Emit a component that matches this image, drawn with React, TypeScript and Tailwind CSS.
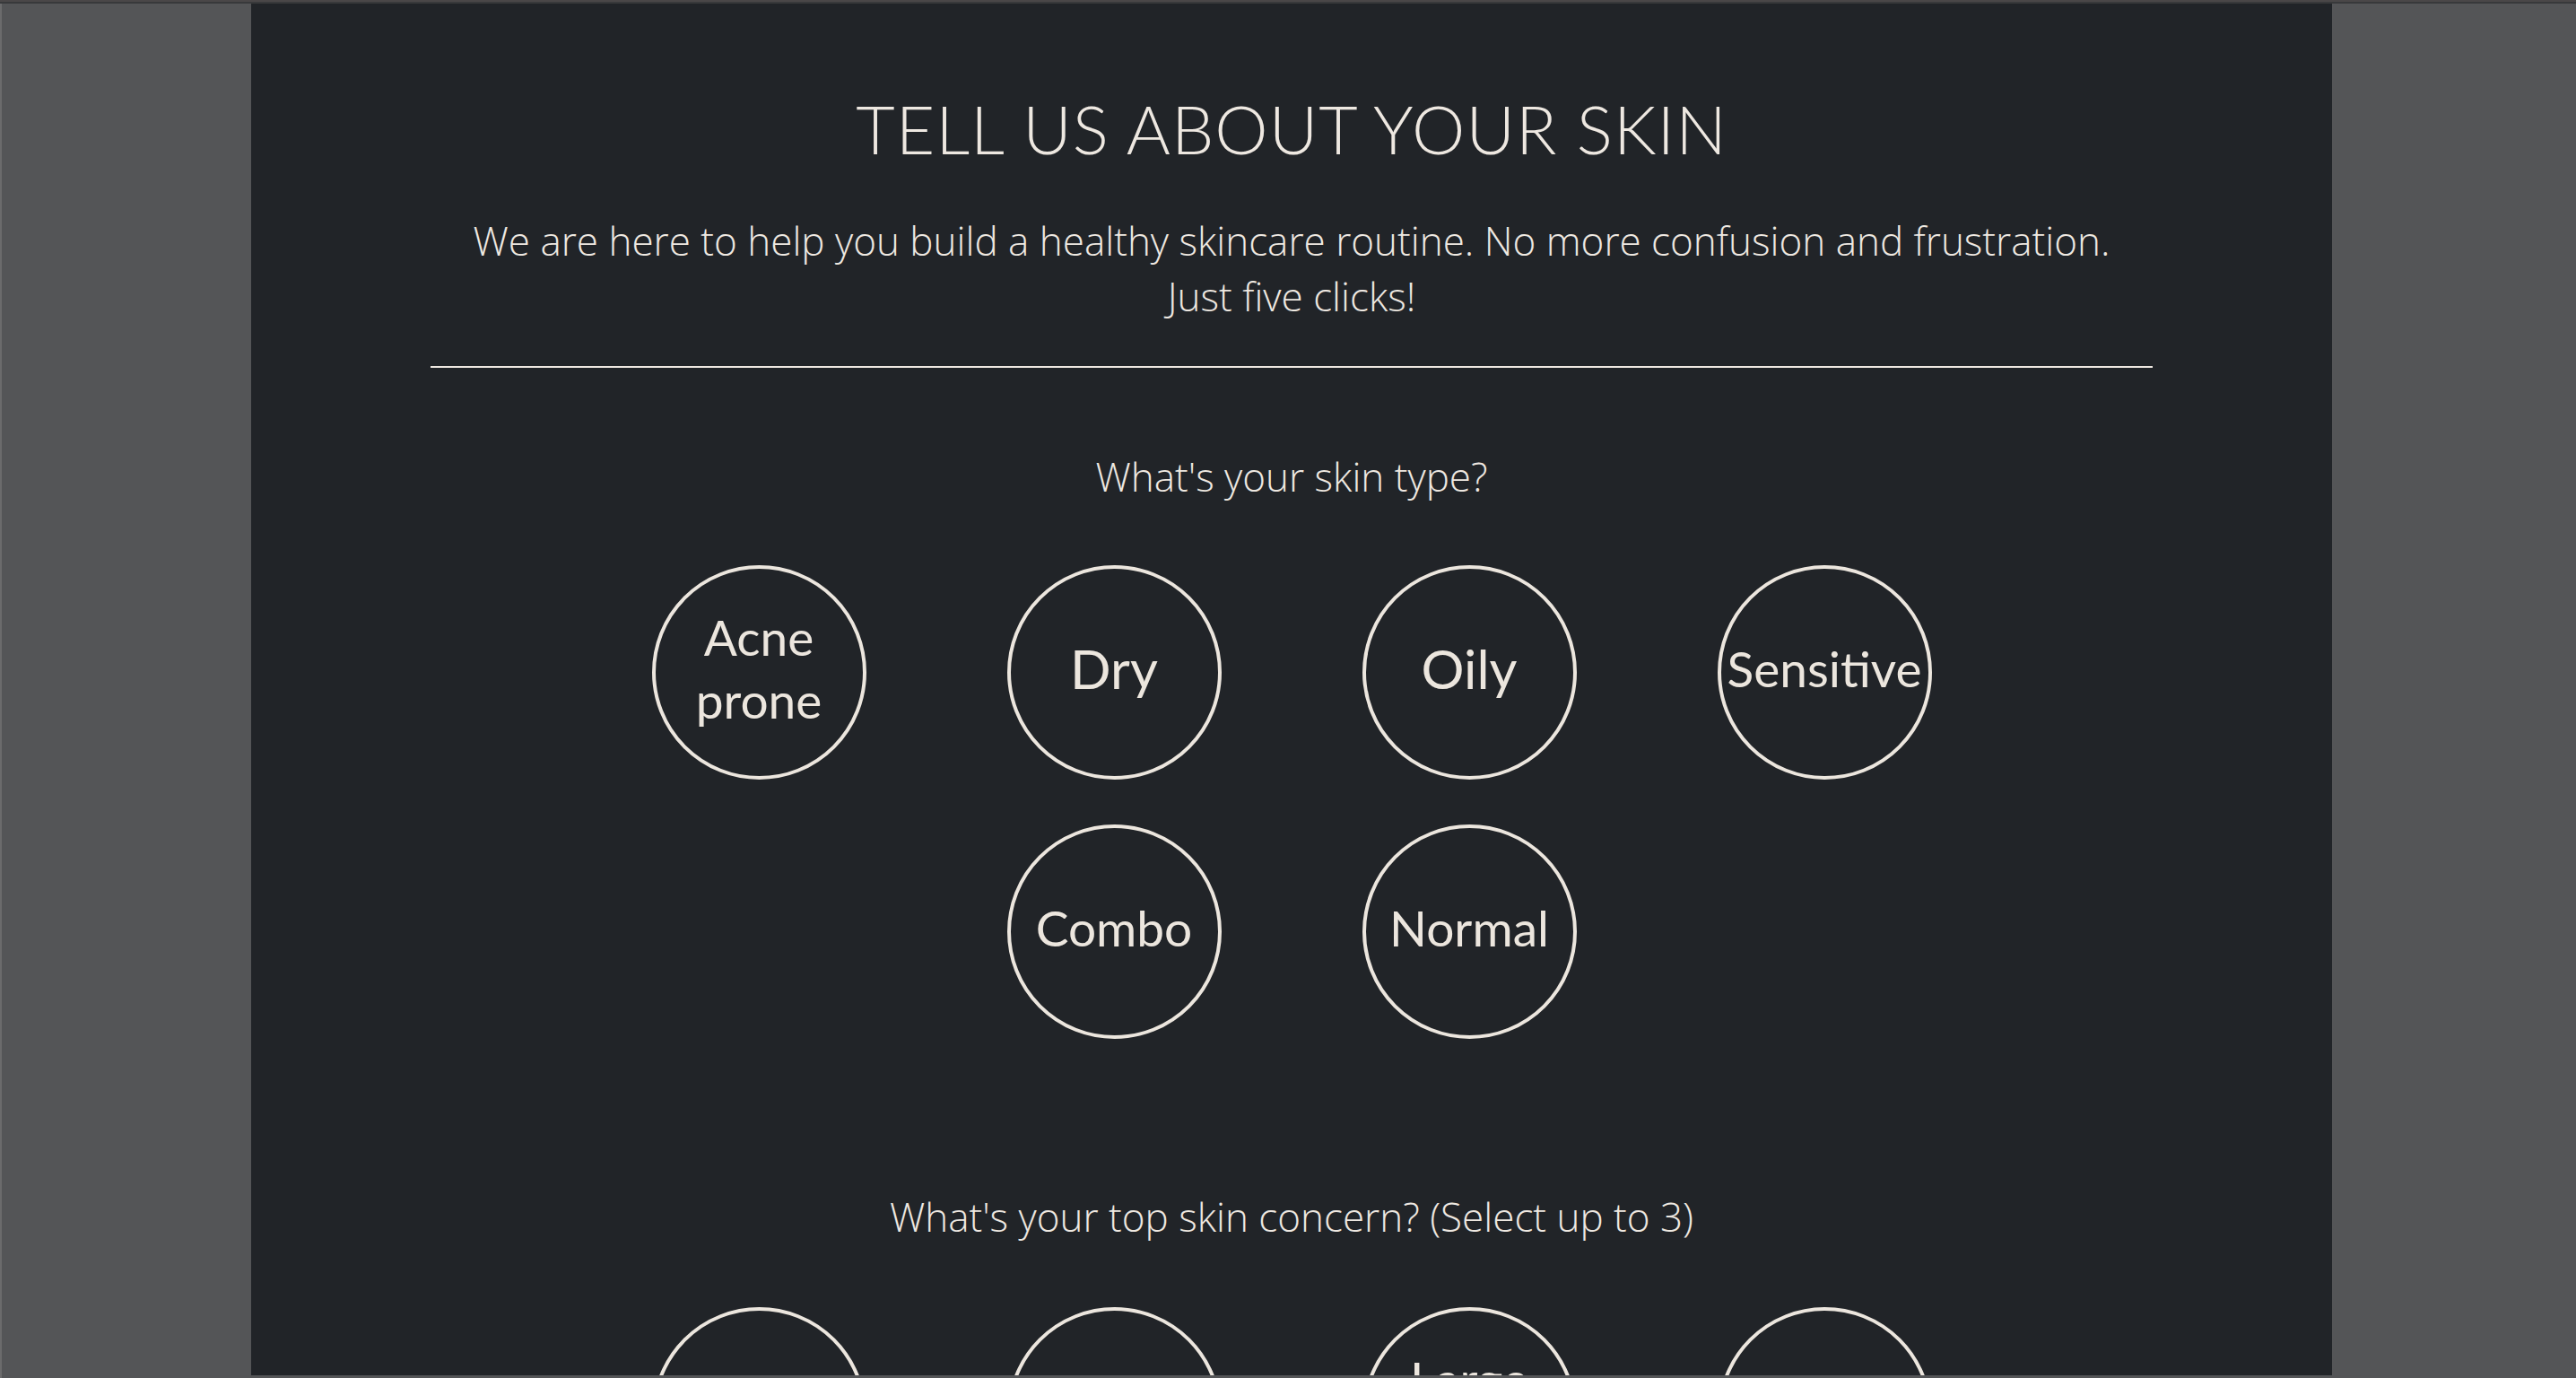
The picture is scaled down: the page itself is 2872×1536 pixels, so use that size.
import React, { useState } from "react";

const skinTypes = [
  { label: "Acne prone", lines: ["Acne", "prone"], size: "text-[55px]" },
  { label: "Dry", lines: ["Dry"], size: "text-[60px]" },
  { label: "Oily", lines: ["Oily"], size: "text-[60px]" },
  { label: "Sensitive", lines: ["Sensitive"], size: "text-[55px]" },
  { label: "Combo", lines: ["Combo"], size: "text-[55px]" },
  { label: "Normal", lines: ["Normal"], size: "text-[55px]" },
];

const concerns = [
  { label: "Acne", lines: ["Acne"], size: "text-[55px]" },
  { label: "Aging", lines: ["Aging"], size: "text-[55px]" },
  { label: "Large pores", lines: ["Large", "pores"], size: "text-[55px]" },
  { label: "Redness", lines: ["Redness"], size: "text-[55px]" },
];

type Option = { label: string; lines: string[]; size: string };

function OptionCircle({
  option,
  selected,
  onClick,
}: {
  option: Option;
  selected: boolean;
  onClick: () => void;
}) {
  return (
    <button
      type="button"
      onClick={onClick}
      className={`w-[239px] h-[239px] shrink-0 rounded-full border-[4.5px] border-[#ece6de] flex flex-col items-center justify-center pb-[9px] font-['Lato',sans-serif] leading-[70px] ${option.size} ${
        selected ? "bg-[#ece6de] text-[#212428]" : "text-[#ece6de]"
      }`}
    >
      {option.lines.map((line) => (
        <span key={line} className="block whitespace-nowrap">
          {line}
        </span>
      ))}
    </button>
  );
}

export default function App() {
  const [skinType, setSkinType] = useState<string | null>(null);
  const [picked, setPicked] = useState<string[]>([]);

  //toggle a concern, max three
  const toggleConcern = (label: string) => {
    if (picked.includes(label)) {
      setPicked(picked.filter((p) => p !== label));
    } else if (picked.length < 3) {
      setPicked([...picked, label]);
    }
  };

  return (
    <div className="h-[1536px] overflow-hidden flex flex-col bg-[#545557]">
      <div className="h-[2px] bg-[#4a4748]"></div>
      <div className="h-[2px] bg-[#38393b]"></div>
      <div className="flex-1 min-h-0 flex border-l-2 border-[#6b6b6c] pl-[278px] pb-[3px]">
        <main className="w-[2320px] bg-[#212428] overflow-hidden text-center text-[#eee8e1]">
          {/* Heading */}
          <h1 className="pt-[102px] text-[75px] leading-[75px] font-light tracking-[1px] font-['Lato',sans-serif]">
            TELL US ABOUT YOUR SKIN
          </h1>
          <p className="mt-[56px] text-[44px] leading-[62px] font-light font-['Open_Sans',sans-serif]">
            We are here to help you build a healthy skincare routine. No more
            confusion and frustration.
            <br />
            Just five clicks!
          </p>
          <div className="mt-[47px] mx-auto w-[1920px] h-[2px] bg-[#eee8e1]"></div>

          {/* Skin type */}
          <h2 className="mt-[90px] text-[44px] leading-[62px] font-light font-['Open_Sans',sans-serif]">
            What's your skin type?
          </h2>
          <div className="mt-[68px] mx-auto w-[1500px] flex flex-wrap justify-center gap-x-[157px] gap-y-[50px]">
            {skinTypes.map((o) => (
              <OptionCircle
                key={o.label}
                option={o}
                selected={skinType === o.label}
                onClick={() => setSkinType(o.label)}
              />
            ))}
          </div>

          {/* Concerns */}
          <h2 className="mt-[167px] text-[44px] leading-[62px] font-light font-['Open_Sans',sans-serif]">
            What's your top skin concern? (Select up to 3)
          </h2>
          <div className="mt-[70px] mx-auto w-[1500px] flex flex-wrap justify-center gap-x-[157px] gap-y-[50px]">
            {concerns.map((o) => (
              <OptionCircle
                key={o.label}
                option={o}
                selected={picked.includes(o.label)}
                onClick={() => toggleConcern(o.label)}
              />
            ))}
          </div>
        </main>
      </div>
    </div>
  );
}
